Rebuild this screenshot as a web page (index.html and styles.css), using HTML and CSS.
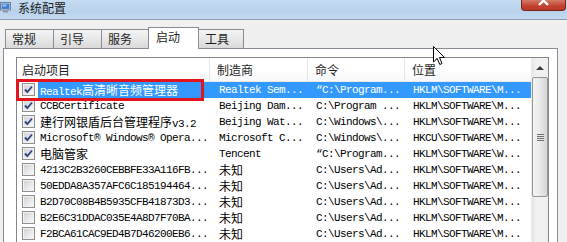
FILE: index.html
```html
<!DOCTYPE html>

<html>
	<head>
		<meta charset="utf-8">
		<title>系统配置</title>
		<link rel="stylesheet" href="styles.css">
	</head>
	<body>
		<div class="window">
			<div class="titlebar">
				<svg class="appIcon" width="11" height="11" viewBox="0 0 11 11">
					<rect x="0.5" y="0.5" width="10" height="7.5" fill="#dfe6ee" stroke="#6f7f92"/>
					<rect x="1.5" y="1.5" width="8" height="5.5" fill="#3f7fd0"/>
					<rect x="2.5" y="2.5" width="4" height="2" fill="#9cc6f2"/>
					<rect x="3" y="8.5" width="5" height="2" fill="#8c97a4"/>
				</svg>
				<span class="title">系统配置</span>
				<div class="closeButton">
					<svg width="12" height="6" viewBox="0 0 12 6">
						<path d="M1 -4 L10 5 M10 -4 L1 5" stroke="#fff" stroke-width="2.4" fill="none"/>
					</svg>
				</div>
			</div>
			<div class="client">
				<div class="tabs">
					<div class="tab">常规</div>
					<div class="tab">引导</div>
					<div class="tab">服务</div>
					<div class="tab active">启动</div>
					<div class="tab last">工具</div>
				</div>
				<div class="panel">
					<div class="list">
						<div class="listMain">
							<div class="header">
								<div class="hcol h1">启动项目</div>
								<div class="hcol h2">制造商</div>
								<div class="hcol h3">命令</div>
								<div class="hcol h4">位置</div>
							</div>

							<div class="row selected">
								<span class="check"><svg class="tick" width="11" height="11" viewBox="0 0 11 11"><path d="M2 5.5 L4.3 8 L9 2.5"/></svg></span>
								<div class="cells">
									<div class="cell c1">Realtek<span class="zh">高清晰音频管理器</span></div>
									<div class="cell c2">Realtek Sem...</div>
									<div class="cell c3">“C:\Program...</div>
									<div class="cell c4">HKLM\SOFTWARE\M...</div>
								</div>
							</div>
							<div class="row">
								<span class="check"><svg class="tick" width="11" height="11" viewBox="0 0 11 11"><path d="M2 5.5 L4.3 8 L9 2.5"/></svg></span>
								<div class="cells">
									<div class="cell c1">CCBCertificate</div>
									<div class="cell c2">Beijing Dam...</div>
									<div class="cell c3">C:\Program ...</div>
									<div class="cell c4">HKLM\SOFTWARE\M...</div>
								</div>
							</div>
							<div class="row">
								<span class="check"><svg class="tick" width="11" height="11" viewBox="0 0 11 11"><path d="M2 5.5 L4.3 8 L9 2.5"/></svg></span>
								<div class="cells">
									<div class="cell c1"><span class="zh">建行网银盾后台管理程序</span>v3.2</div>
									<div class="cell c2">Beijing Wat...</div>
									<div class="cell c3">C:\Windows\...</div>
									<div class="cell c4">HKLM\SOFTWARE\M...</div>
								</div>
							</div>
							<div class="row">
								<span class="check"><svg class="tick" width="11" height="11" viewBox="0 0 11 11"><path d="M2 5.5 L4.3 8 L9 2.5"/></svg></span>
								<div class="cells">
									<div class="cell c1">Microsoft® Windows® Opera...</div>
									<div class="cell c2">Microsoft C...</div>
									<div class="cell c3">C:\Windows\...</div>
									<div class="cell c4">HKCU\SOFTWARE\M...</div>
								</div>
							</div>
							<div class="row">
								<span class="check"><svg class="tick" width="11" height="11" viewBox="0 0 11 11"><path d="M2 5.5 L4.3 8 L9 2.5"/></svg></span>
								<div class="cells">
									<div class="cell c1"><span class="zh">电脑管家</span></div>
									<div class="cell c2">Tencent</div>
									<div class="cell c3">“C:\Program...</div>
									<div class="cell c4">HKLM\SOFTWARE\W...</div>
								</div>
							</div>
							<div class="row">
								<span class="check"></span>
								<div class="cells">
									<div class="cell c1">4213C2B3260CEBBFE33A116FB...</div>
									<div class="cell c2"><span class="zh">未知</span></div>
									<div class="cell c3">C:\Users\Ad...</div>
									<div class="cell c4">HKLM\SOFTWARE\M...</div>
								</div>
							</div>
							<div class="row">
								<span class="check"></span>
								<div class="cells">
									<div class="cell c1">50EDDA8A357AFC6C185194464...</div>
									<div class="cell c2"><span class="zh">未知</span></div>
									<div class="cell c3">C:\Users\Ad...</div>
									<div class="cell c4">HKLM\SOFTWARE\M...</div>
								</div>
							</div>
							<div class="row">
								<span class="check"></span>
								<div class="cells">
									<div class="cell c1">B2D70C08B4B5935CFB41873D3...</div>
									<div class="cell c2"><span class="zh">未知</span></div>
									<div class="cell c3">C:\Users\Ad...</div>
									<div class="cell c4">HKLM\SOFTWARE\M...</div>
								</div>
							</div>
							<div class="row">
								<span class="check"></span>
								<div class="cells">
									<div class="cell c1">B2E6C31DDAC035E4A8D7F70BA...</div>
									<div class="cell c2"><span class="zh">未知</span></div>
									<div class="cell c3">C:\Users\Ad...</div>
									<div class="cell c4">HKLM\SOFTWARE\M...</div>
								</div>
							</div>
							<div class="row">
								<span class="check"></span>
								<div class="cells">
									<div class="cell c1">F2BCA61CAC9ED4B7D46200EB6...</div>
									<div class="cell c2"><span class="zh">未知</span></div>
									<div class="cell c3">C:\Users\Ad...</div>
									<div class="cell c4">HKLM\SOFTWARE\M...</div>
								</div>
							</div>
						</div>
						<div class="scrollbar">
							<div class="arrowUp"></div>
							<div class="thumb"><div class="grip"></div></div>
						</div>
					</div>
				</div>
			</div>

			<div class="highlightBox"></div>
			<svg class="cursor" width="13" height="20" viewBox="0 0 13 20">
				<path d="M0.5 0.5 L0.5 16 L4.2 12.4 L6.8 18.5 L9 17.5 L6.5 11.5 L11.5 11.5 Z" fill="#fff" stroke="#000" stroke-width="1"/>
			</svg>
		</div>
	</body>
</html>
```

FILE: styles.css
```css
*
	{
		box-sizing: border-box;
	}
body
	{
		margin: 0;
		overflow: hidden;
		background-color: #f0f0f0;
		font-family: "Noto Sans CJK SC", "Liberation Sans", sans-serif;
		font-size: 12px;
		color: #1e1e1e;
	}
.window
	{
		position: relative;
		width: 567px;
		height: 242px;
		overflow: hidden;
	}
.titlebar
	{
		display: flex;
		align-items: flex-start;
		height: 20px;
		background: linear-gradient(#c6dcf3, #b9d2ec 60%, #c2d8ef);
		border-bottom: 1px solid #8c9cb0;
	}
.appIcon
	{
		margin: 2px 0 0 0;
	}
.title
	{
		margin-left: 7px;
		line-height: 16px;
		font-size: 12px;
		color: #222;
	}
.closeButton
	{
		display: flex;
		justify-content: center;
		margin-left: auto;
		margin-right: 1px;
		width: 45px;
		height: 11px;
		background: linear-gradient(#d47c68, #c2412f 60%, #b93a2a);
		border: 1px solid #7a2418;
		border-top: none;
		border-radius: 0 0 4px 4px;
	}
.client
	{
		padding-left: 3px;
	}
.tabs
	{
		display: flex;
		align-items: flex-end;
		height: 28px;
		padding-left: 2px;
	}
.tab
	{
		width: 49px;
		height: 19px;
		margin-left: -1px;
		padding-left: 6px;
		line-height: 18px;
		border: 1px solid #898c95;
		border-bottom: none;
		background: linear-gradient(#f4f4f4, #e8e8e8 50%, #d9d9d9);
	}
.tab:first-child
	{
		margin-left: 0;
	}
.tab.active
	{
		position: relative;
		z-index: 1;
		width: 51px;
		height: 22px;
		margin-left: -2px;
		margin-bottom: -1px;
		padding-left: 7px;
		line-height: 17px;
		background: #fff;
	}
.tab.last
	{
		width: 47px;
		margin-left: -2px;
		padding-left: 7px;
	}
.panel
	{
		width: 555px;
		height: 220px;
		padding: 8px 8px 0 12px;
		background: #fff;
		border: 1px solid #898c95;
		border-bottom: none;
	}
.list
	{
		display: flex;
		width: 533px;
		height: 200px;
		border: 1px solid #828790;
		border-bottom: none;
		background: #fff;
	}
.listMain
	{
		width: 514px;
		font-family: "Liberation Mono", "Noto Sans CJK SC", monospace;
		font-size: 11px;
		letter-spacing: -0.6px;
	}
.header
	{
		display: flex;
		height: 24px;
		line-height: 23px;
		font-family: "Noto Sans CJK SC", "Liberation Sans", sans-serif;
		font-size: 12px;
		letter-spacing: 0;
		color: #1e1e1e;
		background: linear-gradient(#fff, #fff 50%, #f7f8fa);
		border-bottom: 1px solid #eaeaea;
	}
.hcol
	{
		padding-left: 7px;
		border-right: 1px solid #e3e5e8;
	}
.h1
	{
		width: 193px;
		padding-left: 5px;
	}
.h2
	{
		width: 98px;
	}
.h3
	{
		width: 97px;
	}
.h4
	{
		width: 124px;
		border-right: none;
	}
.row
	{
		display: flex;
		height: 16px;
		line-height: 16px;
		white-space: nowrap;
	}
.check
	{
		display: flex;
		align-items: center;
		justify-content: center;
		width: 13px;
		height: 13px;
		margin: 1px 3px 0 5px;
		border: 1px solid #8e8f8f;
		background: linear-gradient(135deg, #cfd1d4, #e9eaec 60%, #fafafa);
		box-shadow: inset 0 0 0 1px #f2f2f2;
	}
.tick path
	{
		fill: none;
		stroke: #31437a;
		stroke-width: 1.9;
	}
.cells
	{
		display: flex;
		width: 493px;
		color: #000;
	}
.selected .cells
	{
		background: #3399ff;
		color: #fff;
	}
.cell
	{
		overflow: hidden;
		padding-left: 7px;
	}
.c1
	{
		width: 173px;
		padding-left: 2px;
	}
.c2
	{
		width: 98px;
		padding-left: 8px;
	}
.c3
	{
		width: 97px;
	}
.c4
	{
		width: 125px;
	}
.zh
	{
		font-family: "Noto Sans CJK SC", sans-serif;
		font-size: 12px;
		letter-spacing: 0;
	}
.scrollbar
	{
		width: 17px;
		background: linear-gradient(90deg, #e6e6e6, #f2f2f2 30%, #f0f0f0);
		border-left: 1px solid #eaeaea;
	}
.arrowUp
	{
		height: 18px;
		display: flex;
		align-items: center;
		justify-content: center;
	}
.arrowUp::before
	{
		content: "";
		border-left: 4px solid transparent;
		border-right: 4px solid transparent;
		border-bottom: 4px solid #3c3c3c;
		margin-top: 2px;
	}
.thumb
	{
		display: flex;
		align-items: center;
		justify-content: center;
		width: 16px;
		height: 120px;
		margin-top: 1px;
		border: 1px solid #979797;
		border-radius: 2px;
		background: linear-gradient(90deg, #f4f4f4, #e9e9e9 50%, #d6d6d6);
	}
.grip
	{
		width: 7px;
		height: 7px;
		background: repeating-linear-gradient(#6f6f6f 0 1px, #e8e8e8 1px 2px);
	}
.highlightBox
	{
		position: absolute;
		left: 16px;
		top: 79px;
		width: 188px;
		height: 22px;
		border: 3px solid #e3141c;
	}
.cursor
	{
		position: absolute;
		left: 433px;
		top: 46px;
	}
```
